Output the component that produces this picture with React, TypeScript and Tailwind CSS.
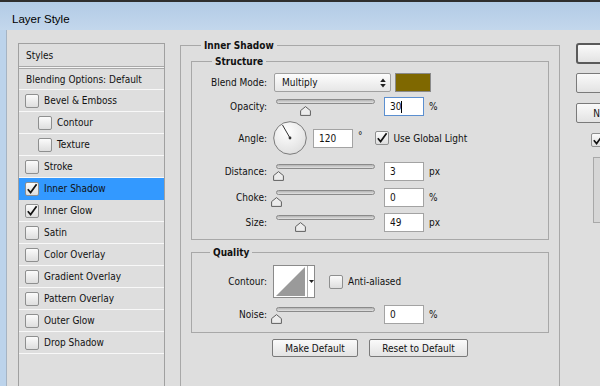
import React from "react";

function Check({ checked = false }: { checked?: boolean }) {
  return (
    <span className="w-[14px] h-[14px] shrink-0 rounded-[2px] border border-[#8e8f8f] bg-linear-to-b from-[#fbfbfb] to-[#dedede] flex items-center justify-center">
      {checked && (
        <svg width="12" height="12" viewBox="0 0 12 12">
          <path d="M1.8 6.2 L4.6 9.6 L10.6 1.2" stroke="#111" strokeWidth="1.7" fill="none" />
        </svg>
      )}
    </span>
  );
}

function Slider({ frac }: { frac: number }) {
  const left = 2 + frac * 99 - 5.5;
  return (
    <div className="relative w-[103px] h-[19px]">
      <div className="mt-[3px] mx-[2px] h-[5px] rounded-full border border-[#8a8a8a] bg-linear-to-b from-[#b4b4b4] to-[#e2e2e2]" />
      <svg className="absolute top-[7px]" style={{ left }} width="11" height="10" viewBox="0 0 11 10">
        <path d="M5.5 0.6 L10.4 4.6 V9.4 H0.6 V4.6 Z" fill="#ececec" stroke="#5e5e5e" strokeWidth="1" />
      </svg>
    </div>
  );
}

function Field({ value, focused = false }: { value: string; focused?: boolean }) {
  return (
    <div
      className={`w-[40px] h-[19px] bg-white pl-[5px] flex items-center border ${
        focused ? "border-[#5b8fd0]" : "border-[#a3a3a3]"
      }`}
    >
      {value}
      {focused && <span className="w-px h-[12px] bg-black" />}
    </div>
  );
}

function Button({ label, w }: { label: string; w: string }) {
  return (
    <div
      className={`${w} h-[18px] rounded-[2px] border border-[#7a7a7a] bg-linear-to-b from-[#fafafa] to-[#e3e3e3] flex items-center justify-center`}
    >
      {label}
    </div>
  );
}

const styleRows: { name: string; checked?: boolean; indent?: boolean; active?: boolean }[] = [
  { name: "Bevel & Emboss" },
  { name: "Contour", indent: true },
  { name: "Texture", indent: true },
  { name: "Stroke" },
  { name: "Inner Shadow", checked: true, active: true },
  { name: "Inner Glow", checked: true },
  { name: "Satin" },
  { name: "Color Overlay" },
  { name: "Gradient Overlay" },
  { name: "Pattern Overlay" },
  { name: "Outer Glow" },
  { name: "Drop Shadow" },
];

export default function App() {
  return (
    <div className="w-[600px] h-[386px] overflow-hidden flex flex-col bg-[#dedede] text-[10px] leading-[13px] text-[#111] font-stretch-condensed font-['DejaVu_Sans_Condensed','DejaVu_Sans',sans-serif]">
      <div className="h-[2px] bg-[#2e2e2e] shrink-0" />
      <div className="h-[28px] shrink-0 bg-linear-to-b from-[#b2cbe6] to-[#c3d7ec] pl-[12px] pt-[10px] text-[11.5px] leading-[14px] text-black font-stretch-normal font-['Liberation_Sans',sans-serif]">
        Layer Style
      </div>

      <div className="flex flex-1 min-h-0">
        <div className="w-[7px] bg-[#bcd3eb] border-r border-[#a6b4c3] shrink-0" />

        <div className="flex flex-1 pl-[11px] pt-[13px] min-w-0">
          {/* styles list */}
          <div className="w-[147px] h-[400px] shrink-0 border border-[#a0a0a0] bg-[#dedede]">
            <div className="h-[22px] pl-[7px] flex items-center">Styles</div>
            <div className="h-px bg-[#a8a8a8]" />
            <div className="h-px bg-[#f4f4f4]" />
            <div className="h-px bg-[#a8a8a8]" />
            <div className="h-[21px] pl-[7px] flex items-center border-b border-[#f8f8f8]">
              Blending Options: Default
            </div>
            {styleRows.map((r) => (
              <div
                key={r.name}
                className={`h-[22px] flex items-center gap-[5px] border-b ${
                  r.active ? "bg-[#3399ff] border-[#3399ff]" : "border-[#f8f8f8]"
                } ${r.indent ? "pl-[19px]" : "pl-[6px]"}`}
              >
                <Check checked={r.checked} />
                <span>{r.name}</span>
              </div>
            ))}
          </div>

          {/* settings */}
          <fieldset className="ml-[15px] mt-[-4px] w-[380px] h-[420px] shrink-0 border border-[#a8a8a8] px-[10px]">
            <legend className="ml-[10px] px-[3px] font-bold">Inner Shadow</legend>

            <fieldset className="mt-[3px] border border-[#a8a8a8] pb-[7px]">
              <legend className="ml-[20px] px-[3px] font-bold">Structure</legend>

              <div className="flex items-center h-[19px] mt-[5px]">
                <span className="w-[75px] text-right">Blend Mode:</span>
                <div className="ml-[7px] w-[117px] h-[19px] rounded-[2px] border border-[#a0a0a0] bg-linear-to-b from-[#fdfdfd] to-[#e6e6e6] flex items-center justify-between pl-[7px] pr-[4px]">
                  <span>Multiply</span>
                  <svg width="6" height="10" viewBox="0 0 6 10">
                    <path d="M3 0.5 L5.8 4 H0.2 Z M3 9.5 L5.8 6 H0.2 Z" fill="#222" />
                  </svg>
                </div>
                <div className="ml-[4px] w-[36px] h-[19px] border border-[#8a8a8a] bg-[#7f6800]" />
              </div>

              <div className="flex items-center h-[19px] mt-[5px]">
                <span className="w-[75px] text-right">Opacity:</span>
                <div className="ml-[7px]">
                  <Slider frac={0.3} />
                </div>
                <div className="ml-[7px]">
                  <Field value="30" focused />
                </div>
                <span className="ml-[5px]">%</span>
              </div>

              <div className="flex items-center h-[36px] mt-[4px]">
                <span className="w-[75px] text-right">Angle:</span>
                <svg className="ml-[6px]" width="34" height="34" viewBox="0 0 34 34">
                  <defs>
                    <radialGradient id="dial" cx="0.4" cy="0.3" r="0.8">
                      <stop offset="0" stopColor="#ffffff" />
                      <stop offset="1" stopColor="#dcdcdc" />
                    </radialGradient>
                  </defs>
                  <circle cx="17" cy="17" r="16.3" fill="url(#dial)" stroke="#7a7a7a" strokeWidth="1" />
                  <line x1="17" y1="17" x2="9.5" y2="4" stroke="#333" strokeWidth="1" />
                  <circle cx="17" cy="17" r="1.4" fill="#333" />
                </svg>
                <div className="ml-[6px]">
                  <Field value="120" />
                </div>
                <span className="ml-[5px] mb-[6px]">°</span>
                <div className="ml-[12px] flex items-center gap-[5px]">
                  <Check checked />
                  <span>Use Global Light</span>
                </div>
              </div>

              {[
                { label: "Distance:", frac: 0.03, value: "3", unit: "px", mt: "mt-[6px]" },
                { label: "Choke:", frac: 0, value: "0", unit: "%", mt: "mt-[7px]" },
                { label: "Size:", frac: 0.25, value: "49", unit: "px", mt: "mt-[6px]" },
              ].map((r) => (
                <div key={r.label} className={`flex items-center h-[19px] ${r.mt}`}>
                  <span className="w-[75px] text-right">{r.label}</span>
                  <div className="ml-[7px]">
                    <Slider frac={r.frac} />
                  </div>
                  <div className="ml-[7px]">
                    <Field value={r.value} />
                  </div>
                  <span className="ml-[5px]">{r.unit}</span>
                </div>
              ))}
            </fieldset>

            <fieldset className="mt-[6px] border border-[#a8a8a8] pb-[8px]">
              <legend className="ml-[18px] px-[3px] font-bold">Quality</legend>

              <div className="flex items-center h-[33px] mt-[6px]">
                <span className="w-[75px] text-right">Contour:</span>
                <div className="ml-[6px] w-[42px] h-[33px] border border-[#8a8a8a] bg-white flex">
                  <svg width="33" height="31" viewBox="0 0 33 31">
                    <path d="M2 30 L31 1 V30 Z" fill="#9a9a9a" />
                  </svg>
                  <div className="flex-1 border-l border-[#b0b0b0] flex items-center justify-center">
                    <svg width="5" height="3" viewBox="0 0 5 3">
                      <path d="M0 0 H5 L2.5 3 Z" fill="#222" />
                    </svg>
                  </div>
                </div>
                <div className="ml-[14px] flex items-center gap-[5px]">
                  <Check />
                  <span>Anti-aliased</span>
                </div>
              </div>

              <div className="flex items-center h-[19px] mt-[7px]">
                <span className="w-[75px] text-right">Noise:</span>
                <div className="ml-[7px]">
                  <Slider frac={0} />
                </div>
                <div className="ml-[7px]">
                  <Field value="0" />
                </div>
                <span className="ml-[5px]">%</span>
              </div>
            </fieldset>

            <div className="flex gap-[11px] ml-[81px] mt-[6px]">
              <Button label="Make Default" w="w-[86px]" />
              <Button label="Reset to Default" w="w-[99px]" />
            </div>
          </fieldset>

          {/* dialog buttons */}
          <div className="ml-[16px] w-[88px] shrink-0 flex flex-col">
            <div className="h-[21px] rounded-[3px] border-2 border-[#5a5a5a] bg-linear-to-b from-[#fafafa] to-[#e3e3e3] flex items-center justify-center">
              OK
            </div>
            <div className="mt-[9px] h-[20px] rounded-[2px] border border-[#7a7a7a] bg-linear-to-b from-[#fafafa] to-[#e3e3e3] flex items-center justify-center">
              Cancel
            </div>
            <div className="mt-[10px] h-[20px] rounded-[2px] border border-[#7a7a7a] bg-linear-to-b from-[#fafafa] to-[#e3e3e3] flex items-center justify-center">
              New Style...
            </div>
            <div className="mt-[10px] pl-[15px] flex items-center gap-[5px]">
              <Check checked />
              <span>Preview</span>
            </div>
            <div className="mt-[10px] ml-[17px] h-[66px] border border-[#a8a8a8] bg-[#d6d6d6]" />
          </div>
        </div>
      </div>
    </div>
  );
}
